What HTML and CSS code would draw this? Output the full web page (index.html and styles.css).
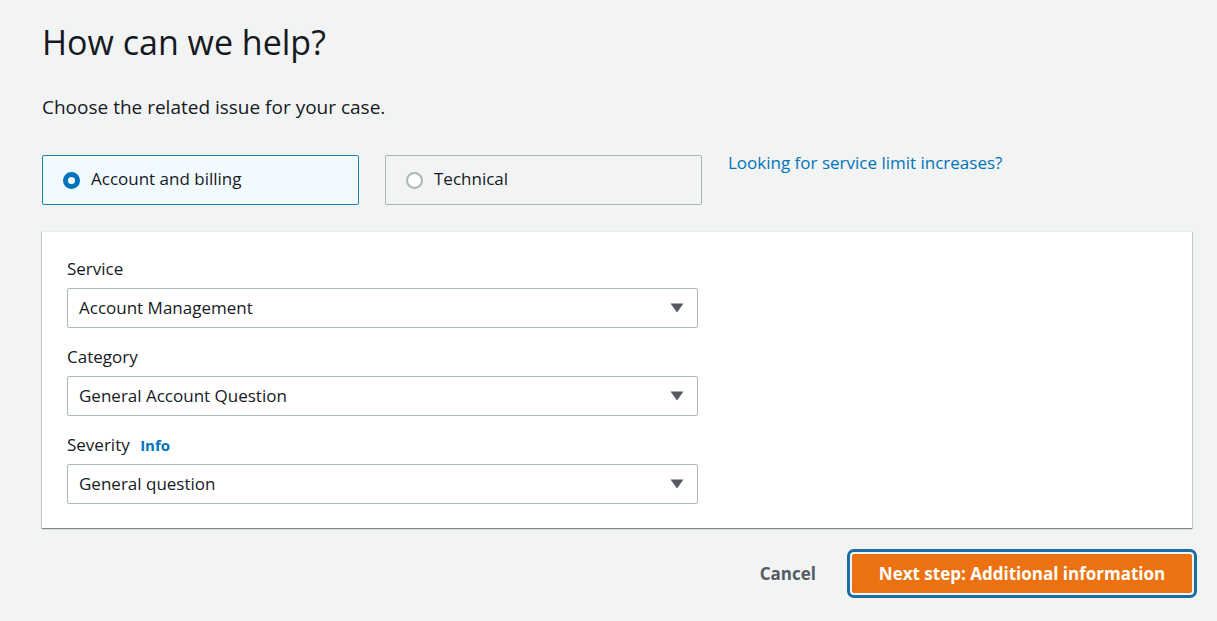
FILE: index.html
```html
<!DOCTYPE html>
<html lang="en">
<head>
<meta charset="utf-8">
<title>How can we help?</title>
<link rel="stylesheet" href="styles.css">
</head>
<body>
<main class="page">
  <h1 class="title">How can we help?</h1>
  <p class="subtitle">Choose the related issue for your case.</p>

  <div class="choices">
    <label class="choice selected">
      <span class="radio on"></span>
      <span class="choice-text">Account and billing</span>
    </label>
    <label class="choice">
      <span class="radio"></span>
      <span class="choice-text">Technical</span>
    </label>
    <a class="limit-link" href="#">Looking for service limit increases?</a>
  </div>

  <section class="panel">
    <div class="field">
      <div class="label">Service</div>
      <div class="select">
        <span>Account Management</span>
        <svg class="caret" width="14" height="10" viewBox="0 0 14 10"><path d="M0.5 0.5 H13.5 L7 9.5 Z" fill="#545b64"/></svg>
      </div>
    </div>
    <div class="field">
      <div class="label">Category</div>
      <div class="select">
        <span>General Account Question</span>
        <svg class="caret" width="14" height="10" viewBox="0 0 14 10"><path d="M0.5 0.5 H13.5 L7 9.5 Z" fill="#545b64"/></svg>
      </div>
    </div>
    <div class="field">
      <div class="label">Severity <a class="info" href="#">Info</a></div>
      <div class="select">
        <span>General question</span>
        <svg class="caret" width="14" height="10" viewBox="0 0 14 10"><path d="M0.5 0.5 H13.5 L7 9.5 Z" fill="#545b64"/></svg>
      </div>
    </div>
  </section>

  <div class="actions">
    <button class="btn-link" type="button">Cancel</button>
    <button class="btn-primary" type="button">Next step: Additional information</button>
  </div>
</main>
</body>
</html>
```

FILE: styles.css
```css
* { box-sizing: border-box; }

html, body {
  margin: 0;
  padding: 0;
  background: #f2f3f3;
}

body {
  font-family: "Open Sans", "Noto Sans", "Liberation Sans", sans-serif;
  color: #16191f;
}

.page {
  padding: 14px 25px 22px 42px;
}

.title {
  margin: 0;
  font-size: 34px;
  font-weight: 400;
  line-height: 56px;
}

.subtitle {
  margin: 24px 0 0;
  font-size: 19px;
  line-height: 26px;
}

.choices {
  margin-top: 35px;
  display: flex;
  align-items: flex-start;
  gap: 26px;
}

.choice {
  width: 317px;
  height: 50px;
  border: 1px solid #aab7b8;
  border-radius: 2px;
  display: flex;
  align-items: center;
  padding: 0 0 3px 20px;
  font-size: 17px;
  cursor: pointer;
}

.choice .radio { margin-top: 3px; }

.choice.selected {
  background: #f1faff;
  border-color: #1a85b0;
}

.radio {
  width: 17px;
  height: 17px;
  border-radius: 50%;
  border: 2px solid #aab7b8;
  background: #fff;
  margin-right: 11px;
  flex: none;
}

.radio.on {
  border: 5px solid #0073bb;
  background: #fff;
}

.limit-link {
  color: #0073bb;
  text-decoration: none;
  font-size: 17px;
  line-height: 20px;
  margin-top: -2px;
}

.panel {
  margin-top: 26px;
  background: #fff;
  border-top: 1px solid #eaeded;
  box-shadow: 0 1px 1px 0 rgba(0, 28, 36, 0.3), 1px 1px 1px 0 rgba(0, 28, 36, 0.15), -1px 1px 1px 0 rgba(0, 28, 36, 0.15);
  padding: 25px 25px 24px;
  display: flex;
  flex-direction: column;
  gap: 17px;
}

.field {
  width: 631px;
}

.label {
  font-size: 17px;
  line-height: 24px;
  margin-bottom: 7px;
}

.info {
  color: #0073bb;
  font-weight: 700;
  font-size: 15px;
  text-decoration: none;
  margin-left: 6px;
}

.select {
  height: 40px;
  border: 1px solid #aab7b8;
  border-radius: 2px;
  display: flex;
  align-items: center;
  justify-content: space-between;
  padding: 0 13px 2px 11px;
  font-size: 17px;
  background: #fff;
}

.caret { display: block; margin-top: 2px; }

.actions {
  margin-top: 26px;
  display: flex;
  justify-content: flex-end;
  align-items: center;
  gap: 36px;
}

.btn-link {
  background: none;
  border: none;
  font-family: inherit;
  font-size: 17px;
  font-weight: 700;
  color: #545b64;
  padding: 0;
  cursor: pointer;
}

.btn-primary {
  width: 340px;
  height: 39px;
  background: #ec7211;
  border: 1px solid #ec7211;
  border-radius: 2px;
  color: #fff;
  font-family: inherit;
  font-size: 17px;
  font-weight: 700;
  padding-bottom: 2px;
  outline: 3px solid #1b6ea3;
  outline-offset: 2px;
  cursor: pointer;
}
```
